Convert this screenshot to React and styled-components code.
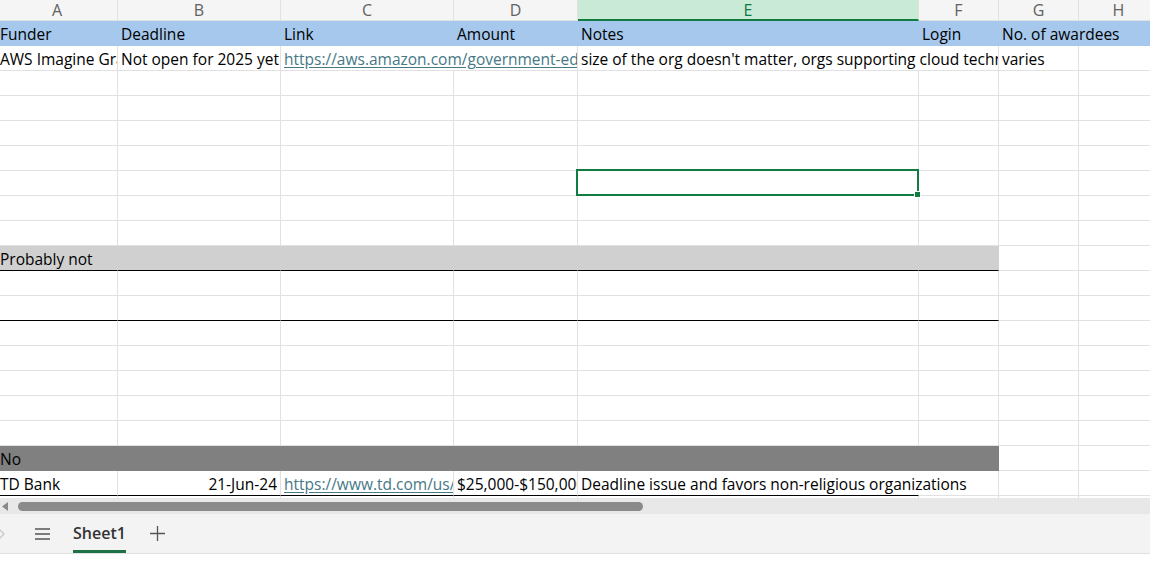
import styled, { createGlobalStyle } from 'styled-components';

const GlobalStyle = createGlobalStyle`
  html, body {
    margin: 0;
    padding: 0;
    background: #ffffff;
  }
  body {
    font-family: "Open Sans", "Liberation Sans", sans-serif;
  }
`;

const COLUMNS = [
  { key: 'A', width: 121 },
  { key: 'B', width: 163 },
  { key: 'C', width: 173 },
  { key: 'D', width: 124 },
  { key: 'E', width: 341 },
  { key: 'F', width: 80 },
  { key: 'G', width: 80 },
  { key: 'H', width: 80 },
];

const ACTIVE_COLUMN = 'E';
const GRID = '#e1e1e1';
const BLUE = '#a6c8ec';
const LIGHT_GREY = '#d0d0d0';
const DARK_GREY = '#808080';

const Page = styled.div`
  width: 1150px;
  height: 561px;
  overflow: hidden;
  display: flex;
  flex-direction: column;
  background: #fff;
`;

const Viewport = styled.div`
  height: 498px;
  overflow: hidden;
  flex: none;
`;

const Grid = styled.div`
  margin-left: -3px;
  width: 1170px;
`;

const HeaderRow = styled.div`
  display: flex;
  height: 21px;
  background: #f5f5f5;
`;

const ColumnHead = styled.div`
  flex: none;
  width: ${(p) => p.$w}px;
  box-sizing: border-box;
  border-right: 1px solid ${GRID};
  border-bottom: ${(p) => (p.$active ? '2px solid #107c41' : `1px solid ${GRID}`)};
  background: ${(p) => (p.$active ? '#caead8' : 'transparent')};
  color: ${(p) => (p.$active ? '#0e7a3f' : '#616161')};
  font-size: 16px;
  line-height: 20px;
  text-align: center;
`;

const Row = styled.div`
  display: flex;
  height: 25px;
`;

const Cell = styled.div`
  flex: none;
  position: relative;
  width: ${(p) => p.$w}px;
  box-sizing: border-box;
  padding: 2px 3px 0;
  background: ${(p) => p.$fill || 'transparent'};
  border-right: 1px solid ${(p) => (p.$spill ? 'transparent' : p.$fill || GRID)};
  border-bottom: 1px solid ${(p) => p.$edge || p.$fill || GRID};
  overflow: ${(p) => (p.$spill || p.$active ? 'visible' : 'hidden')};
  z-index: ${(p) => (p.$spill || p.$active ? 1 : 'auto')};
  white-space: nowrap;
  text-align: ${(p) => p.$align || 'left'};
  font-size: 15.5px;
  line-height: 22px;
  color: #000;
`;

const Link = styled.span`
  color: #467886;
  text-decoration: underline;
  text-underline-offset: 2px;
`;

const Selection = styled.div`
  position: absolute;
  left: -2px;
  top: -2px;
  right: -1px;
  bottom: -1px;
  border: 2px solid #107c41;
  pointer-events: none;
`;

const FillHandle = styled.div`
  position: absolute;
  right: -4px;
  bottom: -4px;
  width: 5px;
  height: 5px;
  background: #107c41;
  border: 1px solid #fff;
`;

const ScrollTrack = styled.div`
  flex: none;
  height: 16px;
  background: #e8e8e8;
  display: flex;
  align-items: center;
  padding-left: 2px;
  gap: 10px;
`;

const ScrollThumb = styled.div`
  width: 625px;
  height: 9px;
  border-radius: 5px;
  background: #8a8a8a;
`;

const TabBar = styled.div`
  flex: none;
  height: 39px;
  background: #f3f3f3;
  border-bottom: 1px solid #e1e1e1;
  display: flex;
  align-items: stretch;
`;

const IconButton = styled.div`
  display: flex;
  align-items: center;
  justify-content: center;
  width: ${(p) => p.$w}px;
  margin-left: ${(p) => p.$offset || 0}px;
`;

const SheetTab = styled.div`
  display: flex;
  align-items: center;
  box-sizing: border-box;
  margin-left: 23px;
  padding-top: 2px;
  border-bottom: 3px solid #1e7145;
  font-size: 16px;
  font-weight: 600;
  color: #333;
`;

const blank = (key) => ({ key });

function buildRows() {
  const empty = () => COLUMNS.map((c) => blank(c.key));
  const rows = [];

  rows.push([
    { key: 'A', text: 'Funder', fill: BLUE },
    { key: 'B', text: 'Deadline', fill: BLUE },
    { key: 'C', text: 'Link', fill: BLUE },
    { key: 'D', text: 'Amount', fill: BLUE },
    { key: 'E', text: 'Notes', fill: BLUE },
    { key: 'F', text: 'Login', fill: BLUE },
    { key: 'G', span: 2, text: 'No. of awardees', fill: BLUE },
  ]);

  rows.push([
    { key: 'A', text: 'AWS Imagine Grant' },
    { key: 'B', text: 'Not open for 2025 yet' },
    {
      key: 'C',
      span: 2,
      link: 'https://aws.amazon.com/government-education/nonprofits/aws-imagine-grant-program/',
    },
    {
      key: 'E',
      span: 2,
      text: "size of the org doesn't matter, orgs supporting cloud technology are preferred",
    },
    { key: 'G', text: 'varies' },
    blank('H'),
  ]);

  for (let i = 0; i < 7; i += 1) {
    const r = empty();
    if (i === 4) r[4] = { key: 'E', active: true };
    rows.push(r);
  }

  const band = (text, fill, edge) =>
    COLUMNS.map((c, i) =>
      i < 6 ? { key: c.key, text: i === 0 ? text : '', fill, edge } : blank(c.key)
    );
  const edged = (edge, upto) =>
    COLUMNS.map((c, i) => (i < upto ? { key: c.key, edge } : blank(c.key)));

  rows.push(band('Probably not', LIGHT_GREY, '#000'));
  rows.push(empty());
  rows.push(edged('#000', 6));
  for (let i = 0; i < 5; i += 1) rows.push(empty());
  rows.push(band('No', DARK_GREY));

  rows.push([
    { key: 'A', text: 'TD Bank', edge: '#000' },
    { key: 'B', text: '21-Jun-24', align: 'right', edge: '#000' },
    {
      key: 'C',
      link: 'https://www.td.com/us/en/about-td/for-communities/ready-commitment',
      edge: '#000',
    },
    { key: 'D', text: '$25,000-$150,000', edge: '#000' },
    {
      key: 'E',
      text: 'Deadline issue and favors non-religious organizations',
      spill: true,
      edge: '#000',
    },
    blank('F'),
    blank('G'),
    blank('H'),
  ]);
  rows.push(empty());
  return rows;
}

const ROWS = buildRows();

function widthOf(key, span = 1) {
  const start = COLUMNS.findIndex((c) => c.key === key);
  return COLUMNS.slice(start, start + span).reduce((s, c) => s + c.width, 0);
}

function SheetCell({ cell }) {
  return (
    <Cell
      $w={widthOf(cell.key, cell.span)}
      $fill={cell.fill}
      $edge={cell.edge}
      $align={cell.align}
      $spill={cell.spill}
      $active={cell.active}
    >
      {cell.link ? <Link>{cell.link}</Link> : cell.text}
      {cell.active && (
        <Selection>
          <FillHandle />
        </Selection>
      )}
    </Cell>
  );
}

function ChevronRight() {
  return (
    <svg width="8" height="14" viewBox="0 0 8 14" fill="none">
      <path d="M1 1l6 6-6 6" stroke="#c4c4c4" strokeWidth="1.2" />
    </svg>
  );
}

function Hamburger() {
  return (
    <svg width="15" height="12" viewBox="0 0 15 12" fill="none">
      <path d="M0 1h15M0 6h15M0 11h15" stroke="#555" strokeWidth="1.4" />
    </svg>
  );
}

function Plus() {
  return (
    <svg width="15" height="15" viewBox="0 0 15 15" fill="none">
      <path d="M7.5 0v15M0 7.5h15" stroke="#555" strokeWidth="1.3" />
    </svg>
  );
}

function ArrowLeft() {
  return (
    <svg width="6" height="9" viewBox="0 0 6 9">
      <path d="M6 0v9L0 4.5z" fill="#8a8a8a" />
    </svg>
  );
}

export default function App() {
  return (
    <Page>
      <GlobalStyle />
      <Viewport>
        <Grid>
          <HeaderRow>
            {COLUMNS.map((c) => (
              <ColumnHead key={c.key} $w={c.width} $active={c.key === ACTIVE_COLUMN}>
                {c.key}
              </ColumnHead>
            ))}
          </HeaderRow>
          {ROWS.map((row, i) => (
            <Row key={i}>
              {row.map((cell) => (
                <SheetCell key={cell.key} cell={cell} />
              ))}
            </Row>
          ))}
        </Grid>
      </Viewport>
      <ScrollTrack>
        <ArrowLeft />
        <ScrollThumb />
      </ScrollTrack>
      <TabBar>
        <IconButton $w={8} $offset={-3}>
          <ChevronRight />
        </IconButton>
        <IconButton $w={15} $offset={30}>
          <Hamburger />
        </IconButton>
        <SheetTab>Sheet1</SheetTab>
        <IconButton $w={15} $offset={24}>
          <Plus />
        </IconButton>
      </TabBar>
    </Page>
  );
}
